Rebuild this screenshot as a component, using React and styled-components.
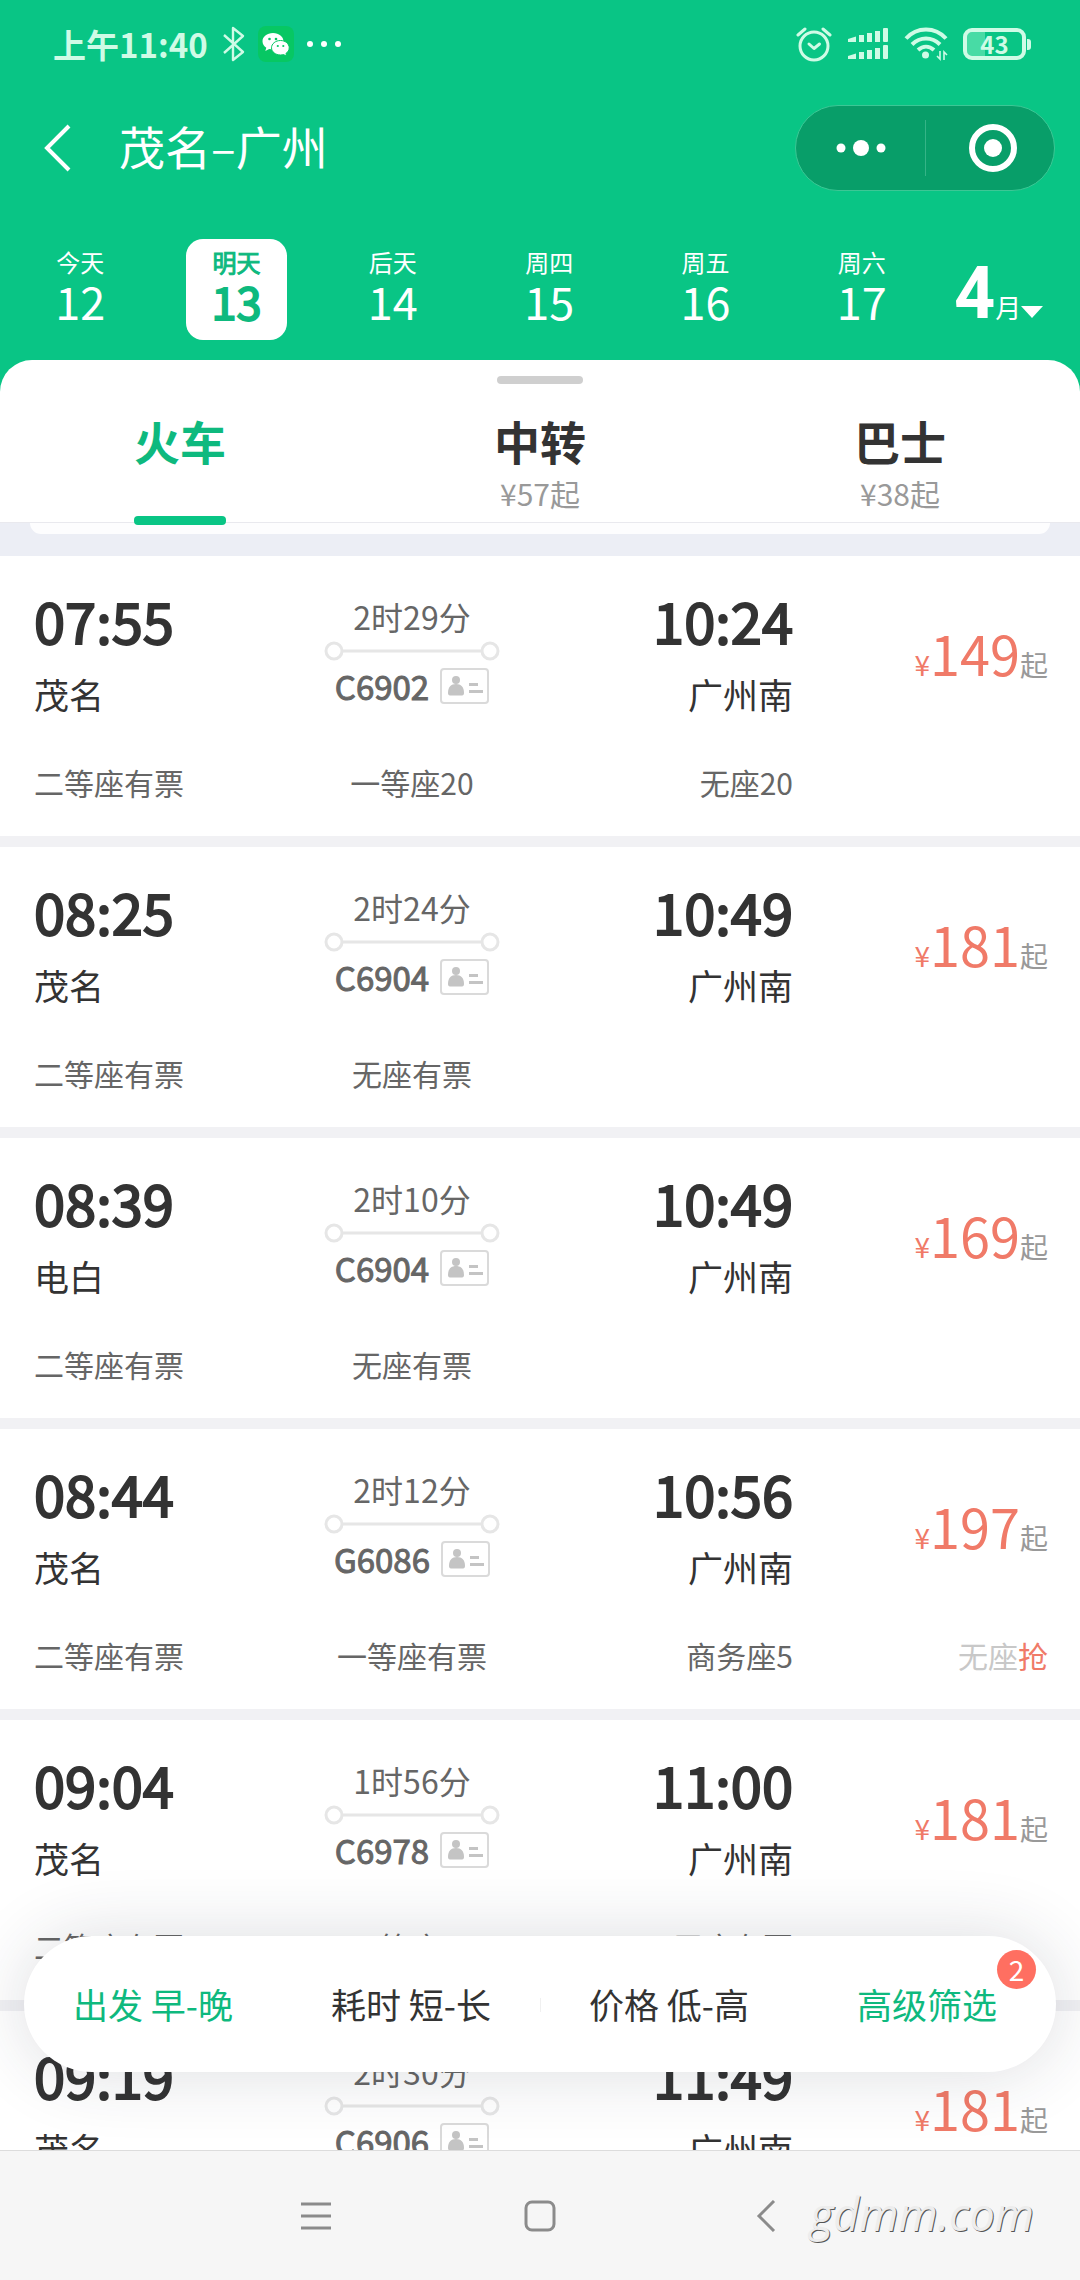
import React from 'react'
import styled, { createGlobalStyle, ThemeProvider } from 'styled-components'

const theme = {
    colors: {
        brand: '#09c585',
        active: '#0eb97e',
        ink: '#333333',
        text: '#666666',
        muted: '#999999',
        price: '#f07a68',
        badge: '#ff6f61',
        divider: '#f1f1f4',
    },
}

const days = [
    { label: '今天', num: 12 },
    { label: '明天', num: 13, active: true },
    { label: '后天', num: 14 },
    { label: '周四', num: 15 },
    { label: '周五', num: 16 },
    { label: '周六', num: 17 },
]

const tabs = [
    { name: '火车', active: true },
    { name: '中转', from: '¥57起' },
    { name: '巴士', from: '¥38起' },
]

const trains = [
    { start: '07:55', from: '茂名', time: '2时29分', no: 'C6902', end: '10:24', to: '广州南', price: 149, seats: ['二等座有票', '一等座20', '无座20'] },
    { start: '08:25', from: '茂名', time: '2时24分', no: 'C6904', end: '10:49', to: '广州南', price: 181, seats: ['二等座有票', '无座有票'] },
    { start: '08:39', from: '电白', time: '2时10分', no: 'C6904', end: '10:49', to: '广州南', price: 169, seats: ['二等座有票', '无座有票'] },
    { start: '08:44', from: '茂名', time: '2时12分', no: 'G6086', end: '10:56', to: '广州南', price: 197, seats: ['二等座有票', '一等座有票', '商务座5'], grab: '无座' },
    { start: '09:04', from: '茂名', time: '1时56分', no: 'C6978', end: '11:00', to: '广州南', price: 181, seats: ['二等座有票', '一等座20', '无座有票'] },
    { start: '09:19', from: '茂名', time: '2时30分', no: 'C6906', end: '11:49', to: '广州南', price: 181, seats: ['二等座有票', '一等座有票', '无座有票'] },
]

const filters = [
    { name: '出发 早-晚', active: true },
    { name: '耗时 短-长' },
    { name: '价格 低-高' },
    { name: '高级筛选', active: true, count: 2 },
]

const BluetoothIcon = () => (
    <svg width="22" height="36" viewBox="0 0 22 36" fill="none" stroke="currentColor" strokeWidth="2.4">
        <path d="M1 9l19 17-10 8V2l10 8L1 27" strokeLinejoin="round" />
    </svg>
)

const WechatIcon = () => (
    <svg width="36" height="36" viewBox="0 0 36 36">
        <rect width="36" height="36" rx="8" fill="#07c763" />
        <path d="M15 7C8.900 7 4.500 10.700 4.500 15.300c0 2.700 1.500 5 3.800 6.500l-1 3.200 3.900-2c1.200.3 2.500.5 3.800.5 6 0 10.500-3.700 10.500-8.200S21 7 15 7z" fill="#fff" />
        <path d="M22.500 14.500c-5 0-9 3.300-9 7.300s4 7.200 9 7.200c1.100 0 2.200-.2 3.100-.4l3.200 1.700-.9-2.800c2-1.300 3.300-3.400 3.300-5.700 0-4-3.800-7.300-8.700-7.300z" fill="#fff" stroke="#07c763" />
        <g fill="#07c763">
            <circle cx="11.500" cy="13" r="1.300" />
            <circle cx="18" cy="13" r="1.300" />
            <circle cx="19.800" cy="20" r="1.100" />
            <circle cx="25.300" cy="20" r="1.100" />
        </g>
    </svg>
)

const AlarmIcon = () => (
    <svg width="36" height="36" viewBox="0 0 36 36" fill="none" stroke="currentColor" strokeWidth="3" strokeLinecap="round">
        <circle cx="18" cy="20" r="14" />
        <path d="M13 18l5 4.500 5.500-4.500" strokeLinejoin="round" />
        <path d="M2 9l7-6M34 9l-7-6" />
    </svg>
)

const SignalIcon = () => (
    <svg width="42" height="34" viewBox="0 0 42 34" fill="currentColor">
        {[0, 17].map(y => (
            <g key={y}>
                <path d={`M1 ${y + 12}l8-2.500v5.500h-8z`} />
                <rect x="12" y={y + 8} width="5" height="7" />
                <rect x="20" y={y + 6} width="5" height="9" />
                <rect x="28" y={y + 4} width="5" height="11" />
                <rect x="36" y={y + 1} width="5" height="14" rx="1" />
            </g>
        ))}
    </svg>
)

const WifiIcon = () => (
    <svg width="44" height="36" viewBox="0 0 44 36" fill="none" stroke="currentColor" strokeWidth="4">
        <path d="M2 12.500c11-12 29-12 40 0" />
        <path d="M8 18.500c8-8 20-8 28 0" />
        <path d="M14 24c5-4.500 11-4.500 16 0" />
        <circle cx="21.500" cy="29" r="3.500" fill="currentColor" stroke="none" />
        <path d="M36 25v8l-3-3M40 34v-8l3 3" strokeWidth="1.600" />
    </svg>
)

const CapsuleDots = () => (
    <svg width="52" height="18" viewBox="0 0 52 18" fill="#fff">
        <circle cx="6" cy="9" r="4.500" />
        <circle cx="26" cy="9" r="8" />
        <circle cx="46" cy="9" r="4.500" />
    </svg>
)

const CapsuleTarget = () => (
    <svg width="50" height="50" viewBox="0 0 50 50">
        <circle cx="25" cy="25" r="21" fill="none" stroke="#fff" strokeWidth="6" />
        <circle cx="25" cy="25" r="9" fill="#fff" />
    </svg>
)

const RouteLine = () => (
    <svg width="176" height="20" viewBox="0 0 176 20" fill="none" stroke="#e6e6e6" strokeWidth="3">
        <path d="M18 10h140" />
        <circle cx="10" cy="10" r="8" />
        <circle cx="166" cy="10" r="8" />
    </svg>
)

const IdCardIcon = () => (
    <svg width="49" height="36" viewBox="0 0 49 36" fill="#c4c4c4">
        <rect x="1" y="1" width="47" height="34" rx="3" fill="none" stroke="#dadada" strokeWidth="2" />
        <circle cx="16" cy="12" r="4" />
        <path d="M8 25c0-6 3-9 8-9s8 3 8 9c0 2-1 2.500-3 2.500h-10c-2 0-3-.5-3-2.500z" />
        <path d="M29 15h9v3h-9zM29 22h14v3h-14z" />
    </svg>
)

const Train = ({ train }) => (
    <TrainRow>
        <Place>
            <Clock>{train.start}</Clock>
            <Station>{train.from}</Station>
        </Place>
        <Middle>
            <Duration>{train.time}</Duration>
            <RouteLine />
            <TrainNo>
                {train.no}
                <IdCardIcon />
            </TrainNo>
        </Middle>
        <Place $right>
            <Clock>{train.end}</Clock>
            <Station>{train.to}</Station>
        </Place>
        <Price>
            <small>¥</small>{train.price}<span>起</span>
        </Price>
        <Seat>{train.seats[0]}</Seat>
        <Seat $align="center">{train.seats[1]}</Seat>
        <Seat $align="right">{train.seats[2]}</Seat>
        <Seat $align="right" $muted>
            {train.grab && <>{train.grab}<em>抢</em></>}
        </Seat>
    </TrainRow>
)

export default function App() {
    return (
        <ThemeProvider theme={theme}>
            <GlobalStyle />
            <Page>
                <Header>
                    <StatusBar>
                        <StatusTime>上午11:40</StatusTime>
                        <BluetoothIcon />
                        <WechatIcon />
                        <MoreDots><i /><i /><i /></MoreDots>
                        <StatusRight>
                            <AlarmIcon />
                            <SignalIcon />
                            <WifiIcon />
                            <Battery>43</Battery>
                        </StatusRight>
                    </StatusBar>
                    <TitleBar>
                        <BackButton aria-label="返回">
                            <svg width="28" height="48" viewBox="0 0 28 48" fill="none" stroke="#fff" strokeWidth="4">
                                <path d="M26 2L4 24l22 22" />
                            </svg>
                        </BackButton>
                        <Title>茂名–广州</Title>
                        <Capsule>
                            <CapsuleButton aria-label="更多"><CapsuleDots /></CapsuleButton>
                            <CapsuleButton aria-label="关闭"><CapsuleTarget /></CapsuleButton>
                        </Capsule>
                    </TitleBar>
                    <Dates>
                        {days.map(day => (
                            <DayButton key={day.num} $active={day.active}>
                                <span>{day.label}</span>
                                <b>{day.num}</b>
                            </DayButton>
                        ))}
                        <MonthButton>
                            <b>4</b>
                            <span>月</span>
                            <svg width="22" height="12" viewBox="0 0 22 12" fill="#fff"><path d="M0 0h22L11 12z" /></svg>
                        </MonthButton>
                    </Dates>
                    <Sheet>
                        <Handle />
                        <Tabs>
                            {tabs.map(tab => (
                                <Tab key={tab.name} $active={tab.active}>
                                    <TabName>{tab.name}</TabName>
                                    {tab.from && <TabPrice>{tab.from}</TabPrice>}
                                    {tab.active && <TabLine />}
                                </Tab>
                            ))}
                        </Tabs>
                    </Sheet>
                </Header>
                <Body>
                    <List>
                        <ListTop><div /></ListTop>
                        {trains.map(train => <Train key={train.start} train={train} />)}
                    </List>
                    <FilterBar>
                        {filters.map(item => (
                            <FilterButton key={item.name} $active={item.active}>
                                {item.name}
                                {item.count && <Badge>{item.count}</Badge>}
                            </FilterButton>
                        ))}
                    </FilterBar>
                </Body>
                <SystemNav>
                    <NavButton aria-label="菜单">
                        <svg width="32" height="32" viewBox="0 0 32 32" stroke="#8b8b8b" strokeWidth="3">
                            <path d="M1 4h30M1 16h30M1 28h30" />
                        </svg>
                    </NavButton>
                    <NavButton aria-label="主页">
                        <svg width="32" height="32" viewBox="0 0 32 32" fill="none" stroke="#8b8b8b" strokeWidth="3">
                            <rect x="2" y="2" width="28" height="28" rx="6" />
                        </svg>
                    </NavButton>
                    <NavButton aria-label="后退">
                        <svg width="32" height="32" viewBox="0 0 32 32" fill="none" stroke="#8b8b8b" strokeWidth="3">
                            <path d="M26 1L11 16l15 15" />
                        </svg>
                    </NavButton>
                    <Watermark>gdmm.com</Watermark>
                </SystemNav>
            </Page>
        </ThemeProvider>
    )
}


//####################### Style #################

const GlobalStyle = createGlobalStyle`
    * {
        box-sizing: border-box;
    }
    body {
        margin: 0;
        font-family: "Noto Sans CJK SC", sans-serif;
        color: ${({ theme }) => theme.colors.ink};
    }
    button {
        margin: 0;
        padding: 0;
        border: 0;
        background: none;
        font: inherit;
        color: inherit;
        cursor: pointer;
    }
    svg {
        display: block;
        flex: none;
    }
`

const Page = styled.div`
    display: flex;
    flex-direction: column;
    width: 100%;
    height: 100vh;
    overflow: hidden;
    background: #fff;
`

const Header = styled.header`
    position: relative;
    z-index: 1;
    flex: none;
    background: ${({ theme }) => theme.colors.brand};
    color: #fff;
`

const StatusBar = styled.div`
    display: flex;
    align-items: center;
    height: 88px;
    padding: 0 54px 0 53px;
    color: #cffbe6;
    gap: 13px;
`

const StatusTime = styled.div`
    font-size: 33px;
    line-height: 48px;
    font-weight: 700;
    margin-right: 2px;
`

const MoreDots = styled.div`
    display: flex;
    gap: 8px;
    i {
        width: 6px;
        height: 6px;
        border-radius: 50%;
        background: #fff;
    }
`

const StatusRight = styled.div`
    display: flex;
    align-items: center;
    gap: 15px;
    margin-left: auto;
`

const Battery = styled.div`
    position: relative;
    display: flex;
    align-items: center;
    justify-content: center;
    width: 63px;
    height: 32px;
    border: 4px solid currentColor;
    border-radius: 9px;
    font-size: 24px;
    line-height: 24px;
    font-weight: 700;
    background: linear-gradient(90deg, #48dba5 18px, #09c585 18px);
    &::after {
        content: '';
        position: absolute;
        right: -9px;
        width: 4px;
        height: 11px;
        border-radius: 0 3px 3px 0;
        background: currentColor;
    }
`

const TitleBar = styled.div`
    display: flex;
    align-items: center;
    height: 119px;
    padding: 0 25px 0 43px;
`

const BackButton = styled.button`
    width: 76px;
`

const Title = styled.h1`
    margin: 0;
    padding-bottom: 6px;
    font-size: 46px;
    line-height: 64px;
    font-weight: 400;
`

const Capsule = styled.div`
    display: flex;
    width: 260px;
    height: 86px;
    margin-left: auto;
    border: 1px solid #3cc795;
    border-radius: 43px;
    background: #089e69;
`

const CapsuleButton = styled.button`
    display: flex;
    align-items: center;
    justify-content: center;
    width: 50%;
    & + & {
        position: relative;
        padding-left: 6px;
    }
    & + &::before {
        content: '';
        position: absolute;
        left: 0;
        width: 1px;
        height: 56px;
        background: #35b487;
    }
`

const Dates = styled.div`
    display: grid;
    grid-template-columns: repeat(6, 1fr) 140px;
    justify-items: center;
    padding: 32px 0 20px 2px;
`

const DayButton = styled.button`
    display: flex;
    flex-direction: column;
    align-items: center;
    width: 101px;
    height: 101px;
    padding-top: 7px;
    border-radius: 17px;
    background: ${({ $active }) => ($active ? '#fff' : 'none')};
    color: ${({ $active, theme }) => ($active ? theme.colors.active : '#fff')};
    -webkit-text-stroke: ${({ $active }) => ($active ? '1px' : '0')} currentColor;
    span {
        font-size: 24px;
        line-height: 32px;
    }
    b {
        font-size: 45px;
        line-height: 46px;
        font-weight: 400;
        -webkit-text-stroke-width: ${({ $active }) => ($active ? '2px' : '0')};
    }
`

const MonthButton = styled.button`
    display: flex;
    align-items: baseline;
    justify-self: start;
    padding: 10px 0 0 14px;
    b {
        font: 700 72px/90px Roboto, sans-serif;
    }
    span {
        font-size: 26px;
    }
    svg {
        margin-bottom: 4px;
    }
`

const Sheet = styled.div`
    padding-top: 16px;
    border-radius: 32px 32px 0 0;
    background: #fff;
    color: ${({ theme }) => theme.colors.ink};
`

const Handle = styled.div`
    width: 86px;
    height: 8px;
    margin: 0 auto 24px;
    border-radius: 4px;
    background: #cfcfcf;
`

const Tabs = styled.nav`
    display: grid;
    grid-template-columns: repeat(3, 1fr);
`

const Tab = styled.button`
    display: flex;
    flex-direction: column;
    align-items: center;
    height: 114px;
    color: ${({ $active, theme }) => ($active ? theme.colors.active : theme.colors.ink)};
`

const TabName = styled.span`
    font-size: 46px;
    line-height: 64px;
    font-weight: 700;
`

const TabPrice = styled.span`
    font-size: 30px;
    line-height: 42px;
    color: ${({ theme }) => theme.colors.muted};
`

// hangs over the hairline below the tabs
const TabLine = styled.span`
    width: 92px;
    height: 9px;
    margin: auto 0 -3px;
    border-radius: 4px;
    background: ${({ theme }) => theme.colors.brand};
`

const Body = styled.main`
    position: relative;
    flex: 1;
    min-height: 0;
`

const List = styled.div`
    height: 100%;
    overflow: hidden;
    background: ${({ theme }) => theme.colors.divider};
`

const ListTop = styled.div`
    height: 34px;
    padding: 0 30px;
    border-top: 1px solid #e9e9ee;
    background: #eceef5;
    div {
        height: 11px;
        border-radius: 0 0 16px 16px;
        background: #fdfdfe;
    }
`

const TrainRow = styled.section`
    display: grid;
    grid-template-columns: 226fr 304fr 229fr 255fr;
    margin-bottom: 11px;
    padding: 30px 32px 32px 34px;
    background: #fff;
`

const Place = styled.div`
    text-align: ${({ $right }) => ($right ? 'right' : 'left')};
`

const Clock = styled.div`
    font-size: 56px;
    line-height: 68px;
    -webkit-text-stroke: 2px currentColor;
`

const Station = styled.div`
    margin-top: 15px;
    font-size: 35px;
    line-height: 50px;
`

const Middle = styled.div`
    display: flex;
    flex-direction: column;
    align-items: center;
    gap: 3px;
    padding-top: 8px;
    color: ${({ theme }) => theme.colors.text};
`

const Duration = styled.div`
    font-size: 32px;
    line-height: 44px;
`

const TrainNo = styled.div`
    display: flex;
    align-items: center;
    gap: 11px;
    font-size: 33px;
    line-height: 44px;
    -webkit-text-stroke: 1px currentColor;
`

const Price = styled.div`
    padding-top: 33px;
    font-size: 54px;
    line-height: 68px;
    text-align: right;
    white-space: nowrap;
    color: ${({ theme }) => theme.colors.price};
    small {
        font-size: 28px;
    }
    span {
        font-size: 28px;
        color: ${({ theme }) => theme.colors.muted};
    }
`

const Seat = styled.div`
    margin-top: 41px;
    min-height: 44px;
    font-size: 30px;
    line-height: 44px;
    text-align: ${({ $align }) => $align || 'left'};
    color: ${({ $muted, theme }) => ($muted ? '#c8c8c8' : theme.colors.text)};
    em {
        font-style: normal;
        color: ${({ theme }) => theme.colors.price};
    }
`

const FilterBar = styled.div`
    position: absolute;
    left: 24px;
    right: 24px;
    bottom: 78px;
    display: grid;
    grid-template-columns: repeat(4, 1fr);
    height: 136px;
    border-radius: 68px;
    background: #fff;
    box-shadow: 0 0 70px rgba(40, 44, 60, 0.16);
`

const FilterButton = styled.button`
    position: relative;
    font-size: 35px;
    line-height: 50px;
    color: ${({ $active, theme }) => ($active ? theme.colors.active : theme.colors.ink)};
    & + &::before {
        content: '';
        position: absolute;
        left: 0;
        top: 62px;
        width: 1px;
        height: 14px;
        background: #f0f0f0;
    }
`

const Badge = styled.span`
    position: absolute;
    top: 14px;
    right: 20px;
    width: 39px;
    height: 39px;
    border-radius: 50%;
    background: ${({ theme }) => theme.colors.badge};
    font-size: 28px;
    line-height: 38px;
    text-align: center;
    color: #fff;
`

const SystemNav = styled.footer`
    position: relative;
    display: flex;
    flex: none;
    justify-content: center;
    gap: 124px;
    height: 130px;
    border-top: 1px solid #dcdcdc;
    background: #f6f6f6;
`

const NavButton = styled.button`
    display: flex;
    align-items: center;
    justify-content: center;
    width: 100px;
`

const Watermark = styled.div`
    position: absolute;
    right: 46px;
    top: 33px;
    font: italic 400 45px/60px "Open Sans", sans-serif;
    color: #ededed;
    text-shadow: 1px 1px 0 #555;
`
